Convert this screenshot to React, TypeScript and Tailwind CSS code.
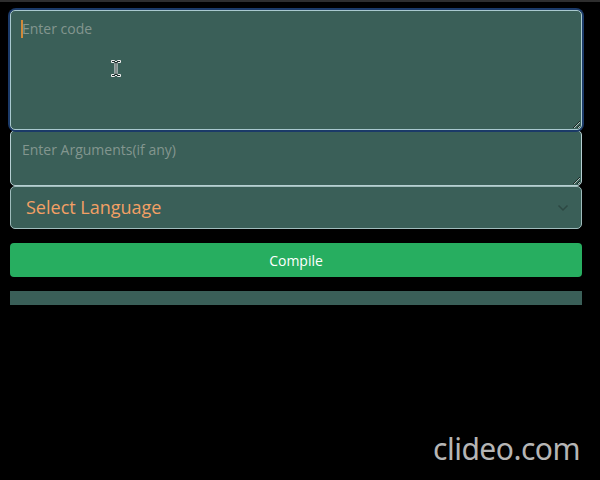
import React from "react";

export default function App() {
  return (
    <div className="relative w-[600px] h-[480px] bg-black overflow-hidden" style={{ fontFamily: '"Open Sans", "Noto Sans", sans-serif' }}>
      <div className="h-[2px] bg-[#2e2e2e]" />
      <div className="flex flex-col pl-[10px] pr-[18px] pt-[8px]">
        <div className="relative rounded-[6px] ring-2 ring-[#1b3a68]">
          <textarea
            readOnly
            placeholder="Enter code"
            className="block w-full h-[120px] rounded-[5px] border border-[#a9c9cf] bg-[#3a5f58] px-[11px] py-[7px] text-[14px] text-white placeholder:text-[#83968f] outline-none resize-y"
          />
          <span className="absolute left-[11px] top-[10px] w-[2px] h-[18px] bg-[#d08a3a]" />
          <svg className="absolute left-[100px] top-[49px]" width="12" height="20" viewBox="0 0 12 20">
            <path d="M1.5 1.5h3l1.5 1.5 1.5-1.5h3v2h-2.5l-1 1v10l1 1h2.5v2h-3l-1.5-1.5-1.5 1.5h-3v-2h2.5l1-1v-10l-1-1h-2.5z" fill="#1b2b2a" stroke="#f0f0f0" strokeWidth="1" />
          </svg>
        </div>
        <textarea
          readOnly
          placeholder="Enter Arguments(if any)"
          className="block w-full h-[56px] rounded-[5px] border border-[#b6cfd2] bg-[#3a5f58] px-[11px] py-[8px] text-[14px] text-white placeholder:text-[#83968f] outline-none resize-y"
        />
        <div className="flex items-center justify-between h-[43px] rounded-[5px] border border-[#9fbcbc] bg-[#3a5f58] pl-[15px] pr-[12px]">
          <span className="text-[18px] text-[#f3a065]">Select Language</span>
          <svg width="12" height="8" viewBox="0 0 12 8">
            <path d="M1.5 1.5l4.5 4.5 4.5-4.5" fill="none" stroke="#2d4843" strokeWidth="1.5" />
          </svg>
        </div>
        <button className="mt-[14px] h-[34px] w-full rounded-[4px] bg-[#27ae60] text-[14px] text-white">
          Compile
        </button>
        <div className="mt-[14px] h-[14px] w-full bg-[#3a5f58]" />
      </div>
      <div className="absolute left-[433px] top-[426px] text-[30px] text-[#b5b5b5] tracking-[-0.5px]" style={{ fontFamily: '"Noto Sans", "Open Sans", sans-serif' }}>
        clideo.com
      </div>
    </div>
  );
}
